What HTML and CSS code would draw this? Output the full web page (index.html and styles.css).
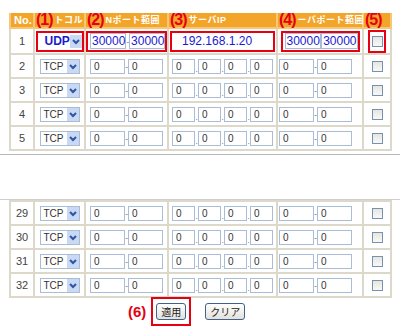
FILE: index.html
```html
<!DOCTYPE html>
<html lang="ja">
<head>
  <meta charset="UTF-8">
  <title>ポート変換</title>
  <link rel="stylesheet" href="styles.css">
</head>
<body>
  <div class="page">
    <table class="rules">
      <colgroup>
        <col class="c-no"><col class="c-proto"><col class="c-lan"><col class="c-ip"><col class="c-port"><col class="c-chk">
      </colgroup>
      <thead>
        <tr>
          <th>No.</th>
          <th><span class="mark">(1)</span>トコル</th>
          <th><span class="mark">(2)</span>Nポート範囲</th>
          <th><span class="mark">(3)</span>サーバIP</th>
          <th><span class="mark">(4)</span>ーバポート範囲</th>
          <th><span class="mark">(5)</span></th>
        </tr>
      </thead>
      <tbody>
        <!-- 1行目: 入力例 -->
        <tr class="first">
          <td class="num">1</td>
          <td><span class="hl hl-proto"><span class="sel sel-big"><span class="sel-val">UDP</span><span class="sel-btn"><svg viewBox="0 0 12 12"><polyline points="3,5 6,8 9,5"/></svg></span></span></span></td>
          <td><span class="hl hl-lan"><span class="box big">30000</span><span class="dash">-</span><span class="box big">30000</span></span></td>
          <td><span class="hl hl-ip"><span class="box big wide">192.168.1.20</span></span></td>
          <td><span class="hl hl-port"><span class="box big">30000</span><span class="gap"></span><span class="box big">30000</span></span></td>
          <td><span class="hl hl-chk"><span class="chk"></span></span></td>
        </tr>
        <tr>
          <td class="num">2</td>
          <td><span class="sel"><span class="sel-val">TCP</span><span class="sel-btn"><svg viewBox="0 0 12 12"><polyline points="3,5 6,8 9,5"/></svg></span></span></td>
          <td><span class="box">0</span><span class="dash">-</span><span class="box">0</span></td>
          <td class="ip"><span class="box">0</span><span class="dot">.</span><span class="box">0</span><span class="dot">.</span><span class="box">0</span><span class="dot">.</span><span class="box">0</span></td>
          <td class="port"><span class="box">0</span><span class="dash">-</span><span class="box">0</span></td>
          <td><span class="chk"></span></td>
        </tr>
        <tr>
          <td class="num">3</td>
          <td><span class="sel"><span class="sel-val">TCP</span><span class="sel-btn"><svg viewBox="0 0 12 12"><polyline points="3,5 6,8 9,5"/></svg></span></span></td>
          <td><span class="box">0</span><span class="dash">-</span><span class="box">0</span></td>
          <td class="ip"><span class="box">0</span><span class="dot">.</span><span class="box">0</span><span class="dot">.</span><span class="box">0</span><span class="dot">.</span><span class="box">0</span></td>
          <td class="port"><span class="box">0</span><span class="dash">-</span><span class="box">0</span></td>
          <td><span class="chk"></span></td>
        </tr>
        <tr>
          <td class="num">4</td>
          <td><span class="sel"><span class="sel-val">TCP</span><span class="sel-btn"><svg viewBox="0 0 12 12"><polyline points="3,5 6,8 9,5"/></svg></span></span></td>
          <td><span class="box">0</span><span class="dash">-</span><span class="box">0</span></td>
          <td class="ip"><span class="box">0</span><span class="dot">.</span><span class="box">0</span><span class="dot">.</span><span class="box">0</span><span class="dot">.</span><span class="box">0</span></td>
          <td class="port"><span class="box">0</span><span class="dash">-</span><span class="box">0</span></td>
          <td><span class="chk"></span></td>
        </tr>
        <tr>
          <td class="num">5</td>
          <td><span class="sel"><span class="sel-val">TCP</span><span class="sel-btn"><svg viewBox="0 0 12 12"><polyline points="3,5 6,8 9,5"/></svg></span></span></td>
          <td><span class="box">0</span><span class="dash">-</span><span class="box">0</span></td>
          <td class="ip"><span class="box">0</span><span class="dot">.</span><span class="box">0</span><span class="dot">.</span><span class="box">0</span><span class="dot">.</span><span class="box">0</span></td>
          <td class="port"><span class="box">0</span><span class="dash">-</span><span class="box">0</span></td>
          <td><span class="chk"></span></td>
        </tr>
      </tbody>
    </table>

    <div class="tear"></div>

    <table class="rules">
      <colgroup>
        <col class="c-no"><col class="c-proto"><col class="c-lan"><col class="c-ip"><col class="c-port"><col class="c-chk">
      </colgroup>
      <tbody>
        <tr>
          <td class="num">29</td>
          <td><span class="sel"><span class="sel-val">TCP</span><span class="sel-btn"><svg viewBox="0 0 12 12"><polyline points="3,5 6,8 9,5"/></svg></span></span></td>
          <td><span class="box">0</span><span class="dash">-</span><span class="box">0</span></td>
          <td class="ip"><span class="box">0</span><span class="dot">.</span><span class="box">0</span><span class="dot">.</span><span class="box">0</span><span class="dot">.</span><span class="box">0</span></td>
          <td class="port"><span class="box">0</span><span class="dash">-</span><span class="box">0</span></td>
          <td><span class="chk"></span></td>
        </tr>
        <tr>
          <td class="num">30</td>
          <td><span class="sel"><span class="sel-val">TCP</span><span class="sel-btn"><svg viewBox="0 0 12 12"><polyline points="3,5 6,8 9,5"/></svg></span></span></td>
          <td><span class="box">0</span><span class="dash">-</span><span class="box">0</span></td>
          <td class="ip"><span class="box">0</span><span class="dot">.</span><span class="box">0</span><span class="dot">.</span><span class="box">0</span><span class="dot">.</span><span class="box">0</span></td>
          <td class="port"><span class="box">0</span><span class="dash">-</span><span class="box">0</span></td>
          <td><span class="chk"></span></td>
        </tr>
        <tr>
          <td class="num">31</td>
          <td><span class="sel"><span class="sel-val">TCP</span><span class="sel-btn"><svg viewBox="0 0 12 12"><polyline points="3,5 6,8 9,5"/></svg></span></span></td>
          <td><span class="box">0</span><span class="dash">-</span><span class="box">0</span></td>
          <td class="ip"><span class="box">0</span><span class="dot">.</span><span class="box">0</span><span class="dot">.</span><span class="box">0</span><span class="dot">.</span><span class="box">0</span></td>
          <td class="port"><span class="box">0</span><span class="dash">-</span><span class="box">0</span></td>
          <td><span class="chk"></span></td>
        </tr>
        <tr>
          <td class="num">32</td>
          <td><span class="sel"><span class="sel-val">TCP</span><span class="sel-btn"><svg viewBox="0 0 12 12"><polyline points="3,5 6,8 9,5"/></svg></span></span></td>
          <td><span class="box">0</span><span class="dash">-</span><span class="box">0</span></td>
          <td class="ip"><span class="box">0</span><span class="dot">.</span><span class="box">0</span><span class="dot">.</span><span class="box">0</span><span class="dot">.</span><span class="box">0</span></td>
          <td class="port"><span class="box">0</span><span class="dash">-</span><span class="box">0</span></td>
          <td><span class="chk"></span></td>
        </tr>
      </tbody>
    </table>

    <div class="actions">
      <span class="mark mark-btn">(6)</span>
      <span class="hl hl-btn"><button class="btn">適用</button></span>
      <button class="btn">クリア</button>
    </div>
  </div>
</body>
</html>
```

FILE: styles.css
```css
body {
  margin: 0;
  font-family: 'Liberation Sans', 'Noto Sans CJK JP', sans-serif;
  font-size: 11px;
  color: #333;
  background: #fff;
}
.page {
  width: 381px;
  padding: 13px 0 0 9px;
}

/* table */
.rules {
  width: 381px;
  border-collapse: collapse;
  table-layout: fixed;
}
.c-no { width: 24px; }
.c-proto { width: 51px; }
.c-lan { width: 83px; }
.c-ip { width: 109px; }
.c-port { width: 86px; }
.c-chk { width: 28px; }
.rules th, .rules td {
  border: 2px solid #dcd8ca;
  padding: 0;
  text-align: center;
  white-space: nowrap;
}
.rules td { overflow: hidden; }
.rules th {
  height: 14px;
  background: #f3a529;
  color: #fff;
  font-size: 9px;
  letter-spacing: 0.5px;
  line-height: 14px;
  font-weight: bold;
  text-align: left;
  padding-left: 1px;
  border-color: #f6c777;
  border-top: none;
}
.rules th:first-child { padding-left: 3px; font-size: 11px; letter-spacing: 0; }
.rules td {
  height: 22px;
  font-size: 0;
}
.rules tr.first td { height: 24px; }
.rules td.num {
  font-size: 11px;
  color: #444;
}
.rules td.port { text-align: left; padding-left: 1px; }

/* red annotations */
.mark {
  color: #e60012;
  font-size: 16px;
  font-weight: bold;
  letter-spacing: -1px;
  line-height: 14px;
  vertical-align: top;
  margin-right: 2px;
}
.hl {
  display: inline-flex;
  align-items: center;
  vertical-align: middle;
  border: 2px solid #e60012;
  box-sizing: border-box;
  height: 21px;
}
.hl-proto { width: 48px; justify-content: center; }
.hl-lan { width: 81px; padding-left: 2px; }
.hl-ip { width: 105px; padding: 0 1px; }
.hl-port { width: 79px; padding-left: 2px; }
.hl-chk { width: 18px; height: 23px; justify-content: center; }

/* controls */
.sel {
  display: inline-flex;
  align-items: center;
  vertical-align: middle;
  width: 40px;
  height: 15px;
  box-sizing: border-box;
  border: 1px solid #a9bdd7;
  background: #fff;
}
.sel-val {
  flex: 1;
  text-align: left;
  padding-left: 3px;
  font-size: 10px;
  color: #333;
}
.sel-btn {
  width: 12px;
  height: 13px;
  background: #c9d8f3;
  display: flex;
}
.sel-btn svg {
  width: 12px;
  height: 12px;
  fill: none;
  stroke: #2f55a4;
  stroke-width: 2;
}
.sel-big {
  border: none;
  width: 40px;
  height: 15px;
}
.sel-big .sel-val {
  font-size: 12px;
  font-weight: bold;
  color: #1a1ad0;
  padding-left: 5px;
}
.box {
  display: inline-block;
  vertical-align: middle;
  width: 35px;
  height: 15px;
  box-sizing: border-box;
  border: 1px solid #a9bdd7;
  background: #fff;
  font-size: 10px;
  line-height: 13px;
  text-align: left;
  padding-left: 3px;
  color: #333;
}
.ip .box { width: 23px; }
.box.big {
  height: 16px;
  width: 38px;
  font-size: 12px;
  line-height: 14px;
  padding-left: 1px;
  color: #1a1ad0;
}
.box.wide {
  width: 101px;
  padding-left: 8px;
  border-color: #fff;
}
.dash, .dot {
  display: inline-block;
  vertical-align: middle;
  width: 3px;
  font-size: 8px;
  color: #555;
  text-align: center;
}
.dot { vertical-align: bottom; }
.gap { display: inline-block; width: 1px; }
.chk {
  display: inline-block;
  vertical-align: middle;
  width: 11px;
  height: 11px;
  box-sizing: border-box;
  border: 1px solid #7990ae;
  background: linear-gradient(#e6e6e0, #f8f8f6);
}

/* page break between 5 and 29 */
.tear {
  height: 44px;
  margin: 3px 0 0 -9px;
  width: 400px;
  border-top: 1px solid #b8b8b8;
  border-bottom: 1px solid #cfcfcf;
  background: #fff;
}

/* buttons */
.actions {
  display: flex;
  align-items: center;
  padding-left: 119px;
  margin-top: -1px;
}
.mark-btn {
  font-size: 15px;
  line-height: 16px;
  letter-spacing: 0;
  margin-right: 5px;
  vertical-align: middle;
}
.hl-btn {
  width: 40px;
  height: 29px;
  justify-content: center;
  margin-right: 14px;
}
.btn {
  font-family: 'Noto Sans CJK JP', sans-serif;
  font-size: 10px;
  height: 17px;
  line-height: 13px;
  padding: 0 4px;
  color: #222;
  border: 1px solid #40618b;
  border-radius: 3px;
  background: linear-gradient(#ffffff, #e2e1da);
}
```
